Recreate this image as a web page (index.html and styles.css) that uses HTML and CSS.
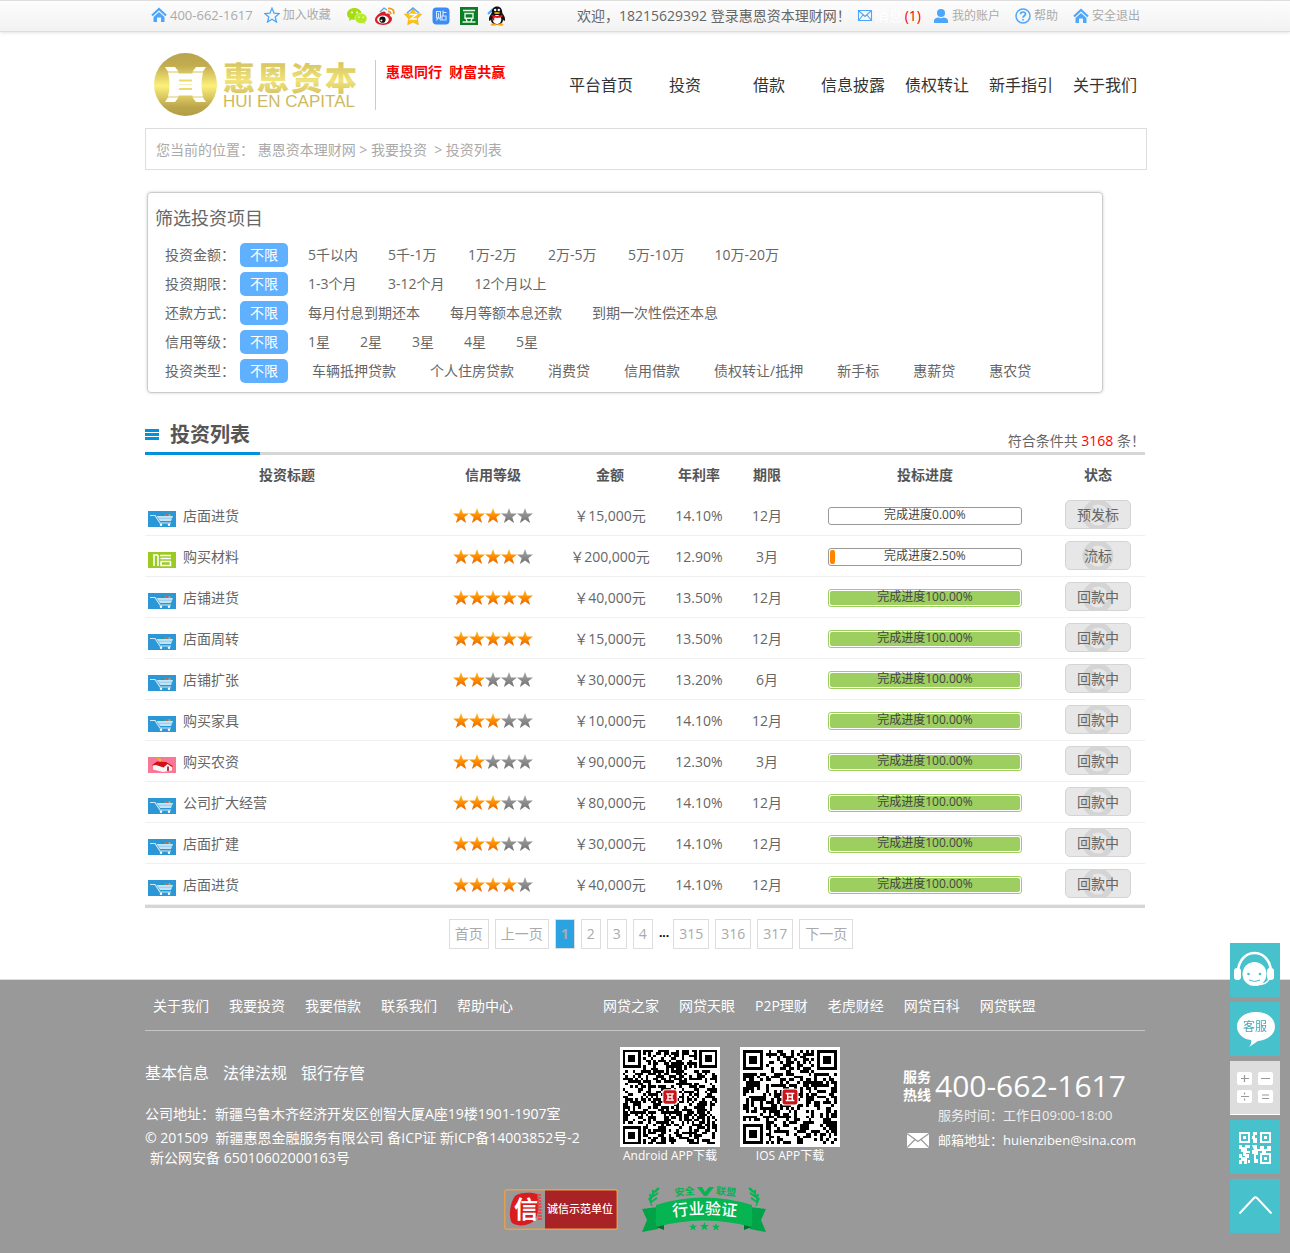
FILE: index.html
```html
<!DOCTYPE html>
<html lang="zh-CN">
<head>
<meta charset="utf-8">
<meta name="viewport" content="width=device-width, initial-scale=1">
<title>投资列表 - 惠恩资本理财网</title>
<link rel="stylesheet" href="styles.css">
</head>
<body>
<svg class="sprite" width="0" height="0" aria-hidden="true">
  <defs>
    <linearGradient id="on" x1="0" y1="0" x2="0" y2="1"><stop offset="0" stop-color="#ffc12e"/><stop offset=".5" stop-color="#ff8c00"/><stop offset="1" stop-color="#e06400"/></linearGradient>
    <linearGradient id="off" x1="0" y1="0" x2="0" y2="1"><stop offset="0" stop-color="#aaa"/><stop offset="1" stop-color="#6f6f6f"/></linearGradient>
    <linearGradient id="gold" x1="0" y1="0" x2="0" y2="1"><stop offset="0" stop-color="#b9a44c"/><stop offset=".2" stop-color="#c2ac50"/><stop offset=".52" stop-color="#fdf07a"/><stop offset=".85" stop-color="#bda74c"/><stop offset="1" stop-color="#b39d45"/></linearGradient>
    <linearGradient id="goldtext" x1="0" y1="0" x2="0" y2="1"><stop offset="0" stop-color="#c9b458"/><stop offset=".6" stop-color="#f0e378"/><stop offset="1" stop-color="#cdb95c"/></linearGradient>
    <path id="star" d="M8 0l2 5.600h6l-4.700 3.600 1.800 5.800L8 11.600 2.900 15l1.800-5.800L0 5.600h6z"/>
    <g id="s-on" fill="url(#on)"><use href="#star"/></g>
    <g id="s-off" fill="url(#off)"><use href="#star"/></g>
  </defs>
  <symbol id="stars-2" viewBox="0 0 80 16"><use href="#s-on"/><use href="#s-on" x="16"/><use href="#s-off" x="32"/><use href="#s-off" x="48"/><use href="#s-off" x="64"/></symbol>
  <symbol id="stars-3" viewBox="0 0 80 16"><use href="#s-on"/><use href="#s-on" x="16"/><use href="#s-on" x="32"/><use href="#s-off" x="48"/><use href="#s-off" x="64"/></symbol>
  <symbol id="stars-4" viewBox="0 0 80 16"><use href="#s-on"/><use href="#s-on" x="16"/><use href="#s-on" x="32"/><use href="#s-on" x="48"/><use href="#s-off" x="64"/></symbol>
  <symbol id="stars-5" viewBox="0 0 80 16"><use href="#s-on"/><use href="#s-on" x="16"/><use href="#s-on" x="32"/><use href="#s-on" x="48"/><use href="#s-on" x="64"/></symbol>
  <symbol id="home" viewBox="0 0 16 16"><path d="M1 8.500L8 2l7 6.500" fill="none" stroke="#4da6fc" stroke-width="2.200"/><path d="M2.500 10L8 5l5.500 5v5H10v-4.500H6V15H2.500z" fill="#4da6fc"/></symbol>
  <symbol id="cart" viewBox="0 0 28 16"><path fill="#2b97d6" d="M0 0h28v16H0z"/><path d="M2 4.500h5l5 7.500h11" fill="none" stroke="#cfe9f8" stroke-width="1.200"/><path d="M8.500 5H25l-2 5H12z" fill="#c3e4f7"/><path d="M10.500 7.300h13.500" stroke="#72b9e4" stroke-width=".6"/><path d="M13 3.500h2.500v1.500H13z" fill="#3d9c5c"/><path d="M17 3h2v2h-2z" fill="#c96b5d"/><path d="M20.500 3.300h2v1.700h-2z" fill="#cdaa45"/><circle cx="13" cy="13.700" r="1.200" fill="#fff"/><circle cx="21" cy="13.700" r="1.200" fill="#fff"/></symbol>
  <symbol id="credit" viewBox="0 0 28 16"><path fill="#9bcb23" d="M0 0h28v16H0z"/><path d="M5 3h5M6 3v11M10 3v11M12 3.500h11M12.500 6.500h10.500M12.500 9.500h10.500M13 10v3.500h9.500V10" fill="none" stroke="#fff" stroke-width="1.600"/></symbol>
  <symbol id="farm" viewBox="0 0 28 16"><path fill="#fa7896" d="M0 0h28v16H0z"/><path d="M9 1h2v1h2v3h-2V2H9z" fill="#f5c21b"/><path d="M5 8.500l4-3 6 4.500 4-4 5 3v4.500L15 15 5 12.500z" fill="#f7f7f7"/><path d="M3.500 8.500L9 4.500l9 .5 7 4-1 1-4.500-3-4 3.500L8 8z" fill="#cf1118"/><path d="M19 9.500h2V14h-2z" fill="#b8383c"/></symbol>
  <symbol id="ban" viewBox="0 0 32 27"><circle cx="16" cy="14" r="13" fill="none" stroke="#d4d4d4" stroke-width="5"/><path d="M7 5l18 18" stroke="#d4d4d4" stroke-width="4"/></symbol>
</svg>

<div class="topbar">
  <div class="wrap topbar-in">
    <div class="top-left">
      <span class="tip phone"><svg class="i16"><use href="#home"/></svg>400-662-1617</span>
      <a class="tip fav" href="#"><svg class="i16" viewBox="0 0 16 16"><path d="M8 1.200l2 4.900 5.200.4-4 3.400 1.300 5.100L8 12.200l-4.500 2.800 1.300-5.100-4-3.400 5.200-.4z" fill="none" stroke="#4da6fc" stroke-width="1.300"/></svg>加入收藏</a>
      <a class="soc" href="#" aria-label="微信"><svg viewBox="0 0 20 20"><path d="M7.500 2C3.200 2 0 4.700 0 8c0 1.900 1 3.500 2.600 4.600L2 15l2.800-1.500c3.500 1 9.700-.9 9.700-5.800C14.500 4.500 11.500 2 7.500 2z" fill="#a5dd12"/><path d="M14 7.500c3.500 0 6 2.100 6 4.900 0 1.600-.8 2.900-2 3.900l.4 2.200-2.300-1.200c-4.300.9-8.100-1.400-8.100-4.900 0-2.800 2.600-4.900 6-4.900z" fill="#b4ea28" stroke="#f7f7f7" stroke-width=".6"/><circle cx="5" cy="6.500" r=".9" fill="#fff"/><circle cx="10" cy="6.500" r=".9" fill="#fff"/><circle cx="12" cy="11.300" r=".8" fill="#fff"/><circle cx="16.200" cy="11.300" r=".8" fill="#fff"/></svg></a>
      <a class="soc" href="#" aria-label="微博"><svg viewBox="0 0 20 20"><path d="M7 6c2-1 4-.8 3.800 1.800 3-1 4.800 0 4 2.200 1.800.6 2.200 1.800 2.200 3 0 3-4 6-8.800 6C3.500 19 0 17 0 13.800 0 10.500 4.500 7 7 6z" fill="#d81e25"/><ellipse cx="8" cy="13.500" rx="5.800" ry="4" fill="#fff"/><circle cx="7.500" cy="13.700" r="3.100" fill="#101010"/><circle cx="6.400" cy="14.600" r="1" fill="#fff"/><path d="M13 2.500c4-.7 6.700 2 5.500 5.600M12.800 5.500c2-.4 3.400.9 2.700 2.700" fill="none" stroke="#f39a20" stroke-width="1.700"/><path d="M5 6l4-4 3 2" fill="none" stroke="#4da6fc" stroke-width="1.300"/></svg></a>
      <a class="soc" href="#" aria-label="QQ空间"><svg viewBox="0 0 20 20"><path d="M10 2l2.600 5.300 5.900.9-4.100 4.400.9 6.100-5.300-2.700-5.300 2.700.9-6.100L1.500 8.200l5.900-.9z" fill="#ffc311" stroke="#f0a30a" stroke-width=".6"/><path d="M4 7l6-5 6 5" fill="none" stroke="#4da6fc" stroke-width="1.500"/><path d="M6.500 8.500h7l-6 4.500h6.500" fill="none" stroke="#fff" stroke-width="1.400"/></svg></a>
      <a class="soc" href="#" aria-label="贴吧"><svg viewBox="0 0 20 20"><rect x="1.500" y="1.500" width="17" height="17" rx="4" fill="#3a8cf8"/><path d="M5.500 5.500h4V12h-4zM7.500 7v4l-2 3.500M8.500 12.500l1.500 2M12 4.500v5M12 6.500h3.500M11 10h4v4h-4z" fill="none" stroke="#d3e8ff" stroke-width="1.100"/></svg></a>
      <a class="soc" href="#" aria-label="豆瓣"><svg viewBox="0 0 20 20"><path d="M1 1h18v18H1z" fill="#0b7d24"/><path d="M4 4.500h12M3.500 16h13M7 12.500l1 3M13 12.500l-1 3" stroke="#e5f5e8" stroke-width="1.400"/><path d="M6 7.500h8v4.700H6z" fill="none" stroke="#e5f5e8" stroke-width="1.400"/></svg></a>
      <a class="soc" href="#" aria-label="QQ"><svg viewBox="0 0 20 20"><path d="M1 8l5-5" stroke="#4da6fc" stroke-width="2"/><path d="M10 .5c3.500 0 5.300 2.500 5.300 6.500 2 2.500 3.200 5 2.600 7.500-.4.900-1.200.3-1.900-1 0 3.500-2 5-6 5s-6-1.500-6-5c-.7 1.300-1.500 1.900-1.900 1C1.500 12 2.700 9.500 4.700 7 4.700 3 6.500.5 10 .5z" fill="#111"/><ellipse cx="10" cy="13.500" rx="4.300" ry="4.500" fill="#fff"/><path d="M4.500 8.500c4 2 7 2 11 0v2.200c-3 1.300-5 1.500-8 .8l-.3 3H5.700v-3.800l-1.200-.5z" fill="#e5141b"/><circle cx="8.200" cy="4" r="1.200" fill="#fff"/><circle cx="11.800" cy="4" r="1.200" fill="#fff"/><ellipse cx="10" cy="7" rx="3" ry="1" fill="#f7a815"/><ellipse cx="6.500" cy="18.700" rx="3" ry="1.100" fill="#f7a815"/><ellipse cx="13.500" cy="18.700" rx="3" ry="1.100" fill="#f7a815"/></svg></a>
    </div>
    <div class="top-right">
      <span class="welcome">欢迎，18215629392 登录惠恩资本理财网<span class="pm">！</span></span>
      <a class="msg" href="#"><svg class="i16" viewBox="0 0 16 16"><path d="M1.500 2.500h13v10h-13zM1.500 2.500L8 8.500l6.500-6M1.500 12.500L6 7M14.500 12.500L10 7" fill="none" stroke="#4da6fc" stroke-width="1.100"/></svg><span class="msg-label">消息</span><span class="red">(1)</span></a>
      <a class="tip account" href="#"><svg class="i16" viewBox="0 0 16 16"><circle cx="8" cy="5" r="4" fill="#4da6fc"/><path d="M1 15v-2.500C1 10.500 4 9.500 5.500 9.500c1.500 1 3.500 1 5 0 1.500 0 4.500 1 4.500 3V15z" fill="#4da6fc"/></svg>我的账户</a>
      <a class="tip help" href="#"><svg class="i16" viewBox="0 0 16 16"><circle cx="8" cy="8" r="7" fill="none" stroke="#4da6fc" stroke-width="1.500"/><path d="M5.500 6.300C5.500 3.300 10.500 3.300 10.500 6c0 1.700-2.500 1.800-2.500 3.700M8 11v1.600" fill="none" stroke="#4da6fc" stroke-width="1.700"/></svg>帮助</a>
      <a class="tip" href="#"><svg class="i16"><use href="#home"/></svg>安全退出</a>
    </div>
  </div>
</div>

<header class="wrap header">
  <a class="logo" href="#" aria-label="惠恩资本"><svg width="212" height="64" viewBox="0 0 212 64">
    <circle cx="31.500" cy="31.500" r="31.500" fill="url(#gold)"/>
    <path d="M11 14h10l3.500 4.500H14zM52 14H42l-3.500 4.500H49zM11 49h10l3.500-4.500H14zM52 49H42l-3.500-4.500H49z" fill="#fff"/>
    <path d="M14 19.500h10.500V20.500h14V19.500H49q-3 12 0 24H38.500v-1h-14v1H14q3-12 0-24z" fill="#fff"/>
    <path d="M25 27.500h13M25 36h13" stroke="#eadb6c" stroke-width="1.800"/><path d="M25 31.500h13" stroke="#f5ebae" stroke-width=".8"/>
    <text class="logo-cn" x="69 103 137 171" y="37" fill="url(#goldtext)">惠恩资本</text>
    <text class="logo-en" x="69" y="54" fill="#cdba5e">HUI EN CAPITAL</text>
  </svg></a>
  <p class="slogan">惠恩同行&nbsp; 财富共赢</p>
  <nav class="nav">
    <a href="#">平台首页</a><a href="#">投资</a><a href="#">借款</a><a href="#">信息披露</a><a href="#">债权转让</a><a href="#">新手指引</a><a href="#">关于我们</a>
  </nav>
</header>

<main class="wrap">
  <div class="crumb">您当前的位置<span class="pm">：</span> <a href="#">惠恩资本理财网</a> &gt; <a href="#">我要投资</a>&nbsp; &gt; <a href="#">投资列表</a></div>

  <section class="filter">
    <h2>筛选投资项目</h2>
    <div class="frow even"><span class="flabel">投资金额<span class="pm">：</span></span><a class="on" href="#">不限</a><a href="#">5千以内</a><a href="#">5千-1万</a><a href="#">1万-2万</a><a href="#">2万-5万</a><a href="#">5万-10万</a><a href="#">10万-20万</a></div>
    <div class="frow even"><span class="flabel">投资期限<span class="pm">：</span></span><a class="on" href="#">不限</a><a href="#">1-3个月</a><a href="#">3-12个月</a><a href="#">12个月以上</a></div>
    <div class="frow"><span class="flabel">还款方式<span class="pm">：</span></span><a class="on" href="#">不限</a><a href="#">每月付息到期还本</a><a href="#">每月等额本息还款</a><a href="#">到期一次性偿还本息</a></div>
    <div class="frow"><span class="flabel">信用等级<span class="pm">：</span></span><a class="on" href="#">不限</a><a href="#">1星</a><a href="#">2星</a><a href="#">3星</a><a href="#">4星</a><a href="#">5星</a></div>
    <div class="frow wide"><span class="flabel">投资类型<span class="pm">：</span></span><a class="on" href="#">不限</a><a href="#">车辆抵押贷款</a><a href="#">个人住房贷款</a><a href="#">消费贷</a><a href="#">信用借款</a><a href="#">债权转让/抵押</a><a href="#">新手标</a><a href="#">惠薪贷</a><a href="#">惠农贷</a></div>
  </section>

  <section>
    <div class="list-head">
      <h1><svg width="14" height="12" viewBox="0 0 14 12"><path d="M0 0h14v3H0zM0 4h14v3H0zM0 8h14v3H0z" fill="#0092dc"/></svg>投资列表</h1>
      <p class="count">符合条件共 <span class="red">3168</span> 条<span class="pm">！</span></p>
    </div>
    <table class="list">
      <colgroup><col class="c-title"><col class="c-star"><col class="c-amt"><col class="c-rate"><col class="c-term"><col class="c-prog"><col class="c-state"></colgroup>
      <thead><tr><th>投资标题</th><th>信用等级</th><th>金额</th><th>年利率</th><th>期限</th><th>投标进度</th><th>状态</th></tr></thead>
      <tbody>
        <tr><td><a class="title" href="#"><svg><use href="#cart"/></svg>店面进货</a></td><td><svg class="stars"><use href="#stars-3"/></svg></td><td>￥15,000元</td><td>14.10%</td><td>12月</td><td><div class="prog"><span class="ptext">完成进度0.00%</span></div></td><td><button class="state" type="button"><svg><use href="#ban"/></svg><span>预发标</span></button></td></tr>
        <tr><td><a class="title" href="#"><svg><use href="#credit"/></svg>购买材料</a></td><td><svg class="stars"><use href="#stars-4"/></svg></td><td>￥200,000元</td><td>12.90%</td><td>3月</td><td><div class="prog"><i class="bar" style="width:2.5%"></i><span class="ptext">完成进度2.50%</span></div></td><td><button class="state" type="button"><svg><use href="#ban"/></svg><span>流标</span></button></td></tr>
        <tr><td><a class="title" href="#"><svg><use href="#cart"/></svg>店铺进货</a></td><td><svg class="stars"><use href="#stars-5"/></svg></td><td>￥40,000元</td><td>13.50%</td><td>12月</td><td><div class="prog full"><i class="bar" style="width:100%"></i><span class="ptext">完成进度100.00%</span></div></td><td><button class="state" type="button"><svg><use href="#ban"/></svg><span>回款中</span></button></td></tr>
        <tr><td><a class="title" href="#"><svg><use href="#cart"/></svg>店面周转</a></td><td><svg class="stars"><use href="#stars-5"/></svg></td><td>￥15,000元</td><td>13.50%</td><td>12月</td><td><div class="prog full"><i class="bar" style="width:100%"></i><span class="ptext">完成进度100.00%</span></div></td><td><button class="state" type="button"><svg><use href="#ban"/></svg><span>回款中</span></button></td></tr>
        <tr><td><a class="title" href="#"><svg><use href="#cart"/></svg>店铺扩张</a></td><td><svg class="stars"><use href="#stars-2"/></svg></td><td>￥30,000元</td><td>13.20%</td><td>6月</td><td><div class="prog full"><i class="bar" style="width:100%"></i><span class="ptext">完成进度100.00%</span></div></td><td><button class="state" type="button"><svg><use href="#ban"/></svg><span>回款中</span></button></td></tr>
        <tr><td><a class="title" href="#"><svg><use href="#cart"/></svg>购买家具</a></td><td><svg class="stars"><use href="#stars-3"/></svg></td><td>￥10,000元</td><td>14.10%</td><td>12月</td><td><div class="prog full"><i class="bar" style="width:100%"></i><span class="ptext">完成进度100.00%</span></div></td><td><button class="state" type="button"><svg><use href="#ban"/></svg><span>回款中</span></button></td></tr>
        <tr><td><a class="title" href="#"><svg><use href="#farm"/></svg>购买农资</a></td><td><svg class="stars"><use href="#stars-2"/></svg></td><td>￥90,000元</td><td>12.30%</td><td>3月</td><td><div class="prog full"><i class="bar" style="width:100%"></i><span class="ptext">完成进度100.00%</span></div></td><td><button class="state" type="button"><svg><use href="#ban"/></svg><span>回款中</span></button></td></tr>
        <tr><td><a class="title" href="#"><svg><use href="#cart"/></svg>公司扩大经营</a></td><td><svg class="stars"><use href="#stars-3"/></svg></td><td>￥80,000元</td><td>14.10%</td><td>12月</td><td><div class="prog full"><i class="bar" style="width:100%"></i><span class="ptext">完成进度100.00%</span></div></td><td><button class="state" type="button"><svg><use href="#ban"/></svg><span>回款中</span></button></td></tr>
        <tr><td><a class="title" href="#"><svg><use href="#cart"/></svg>店面扩建</a></td><td><svg class="stars"><use href="#stars-3"/></svg></td><td>￥30,000元</td><td>14.10%</td><td>12月</td><td><div class="prog full"><i class="bar" style="width:100%"></i><span class="ptext">完成进度100.00%</span></div></td><td><button class="state" type="button"><svg><use href="#ban"/></svg><span>回款中</span></button></td></tr>
        <tr><td><a class="title" href="#"><svg><use href="#cart"/></svg>店面进货</a></td><td><svg class="stars"><use href="#stars-4"/></svg></td><td>￥40,000元</td><td>14.10%</td><td>12月</td><td><div class="prog full"><i class="bar" style="width:100%"></i><span class="ptext">完成进度100.00%</span></div></td><td><button class="state" type="button"><svg><use href="#ban"/></svg><span>回款中</span></button></td></tr>
      </tbody>
    </table>
    <nav class="pager" aria-label="分页"><a href="#">首页</a><a href="#">上一页</a><a class="cur" href="#">1</a><a href="#">2</a><a href="#">3</a><a href="#">4</a><span>...</span><a href="#">315</a><a href="#">316</a><a href="#">317</a><a href="#">下一页</a></nav>
  </section>
</main>

<footer class="footer">
  <div class="wrap">
    <div class="flinks">
      <nav><a href="#">关于我们</a><a href="#">我要投资</a><a href="#">我要借款</a><a href="#">联系我们</a><a href="#">帮助中心</a></nav>
      <nav><a href="#">网贷之家</a><a href="#">网贷天眼</a><a href="#">P2P理财</a><a href="#">老虎财经</a><a href="#">网贷百科</a><a href="#">网贷联盟</a></nav>
    </div>
    <div class="finfo">
      <div class="company">
        <nav><a href="#">基本信息</a><a href="#">法律法规</a><a href="#">银行存管</a></nav>
        <p class="addr">公司地址<span class="pm">：</span>新疆乌鲁木齐经济开发区创智大厦A座19楼1901-1907室</p>
        <p>© 201509&nbsp; 新疆惠恩金融服务有限公司 备ICP证 新ICP备14003852号-2</p>
        <p class="police">新公网安备 65010602000163号</p>
      </div>
      <figure><svg class="qr" data-seed="7" viewBox="-1 -1 39 39" data-size="37"></svg><figcaption>Android APP下载</figcaption></figure>
      <figure><svg class="qr" data-seed="23" viewBox="-1 -1 35 35" data-size="33"></svg><figcaption>IOS APP下载</figcaption></figure>
      <div class="contact">
        <div class="hot"><b>服务<br>热线</b><strong>400-662-1617</strong></div>
        <p class="hours">服务时间<span class="pm">：</span>工作日09:00-18:00</p>
        <p class="mail"><svg width="22" height="15" viewBox="0 0 22 15"><path d="M0 0h22v15H0z" fill="#fff"/><path d="M0 .5l11 8 11-8M0 14.500l8-8M22 14.500l-8-8" fill="none" stroke="#999" stroke-width="1.200"/></svg><span class="mail-label">邮箱地址<span class="pm">：</span></span><a href="mailto:huienziben@sina.com">huienziben@sina.com</a></p>
      </div>
    </div>
    <div class="badges">
      <a href="#" aria-label="诚信示范单位"><svg width="114" height="41" viewBox="0 0 114 41"><rect x="1" y="1" width="112" height="39" rx="2" fill="#999"/><path d="M41 1h72v39H41z" fill="#a92226"/><rect x=".75" y=".75" width="112.500" height="39.500" rx="2" fill="none" stroke="#eca148" stroke-width="1.300"/><path d="M11 7c5-4 16-4 22-2 3 6 2 22-3 27-6 5-16 6-22 2-4-6-2-20 3-27z" fill="#da1c1f"/><path d="M35 5l1 27" stroke="#e5494b" stroke-width="4" stroke-dasharray="2 1"/><text class="b-xin" x="10" y="29">信</text><text class="b-cx" x="43" y="24">诚信示范单位</text></svg></a>
      <a href="#" aria-label="行业验证"><svg width="124" height="52" viewBox="0 -3 124 52"><path id="arc1" d="M12 34Q62 23 112 34" fill="none"/><path id="arc2" d="M28 11Q62 5 98 11" fill="none"/><path d="M0 23l16-2v22l-16 3 5-12zM124 23l-16-2v22l16 3-5-12z" fill="#00a347"/><path d="M14 19Q62 4 110 19V41Q62 28 14 41z" fill="#06b452"/><path d="M14 41l8-2v5zM110 41l-8-2v5z" fill="#00732f"/><path d="M55 1h5l3 5 4-5h5l-7 9h-3z" fill="#06b452"/><path d="M10 20C7 14 10 7 16 2M114 20c3-6 0-13-6-18" fill="none" stroke="#06b452" stroke-width="1.300"/><path d="M9 17l-2-5M9 13l-1-5M11 9l0-5M9 16l6-4M10 11l6-4M13 6l4-4M115 17l2-5M115 13l1-5M113 9V4M115 16l-6-4M114 11l-6-4M111 6l-4-4" stroke="#06b452" stroke-width="2"/><g fill="#06b452"><use href="#star" transform="translate(47 37) scale(.5)"/><use href="#star" transform="translate(58 36) scale(.55)"/><use href="#star" transform="translate(70 37) scale(.5)"/></g><text class="b-hy"><textPath href="#arc1" startOffset="19">行业验证</textPath></text><text class="b-aq"><textPath href="#arc2" startOffset="5">安全</textPath></text><text class="b-aq"><textPath href="#arc2" startOffset="46">联盟</textPath></text></svg></a>
    </div>
  </div>
</footer>

<aside class="side">
  <a href="#" aria-label="在线客服"><svg viewBox="0 0 50 54"><circle cx="24.500" cy="31" r="12" fill="#fff"/><path d="M8 28C10 4 39 4 41 28" fill="none" stroke="#fff" stroke-width="2.500"/><rect x="4" y="25" width="7" height="12" rx="3" fill="#fff"/><rect x="37" y="25" width="7" height="12" rx="3" fill="#fff"/><path d="M39 36c-2 5-6 5-13 6" fill="none" stroke="#fff" stroke-width="1.500"/><circle cx="18.500" cy="31" r="1.300" fill="#47c1cb"/><circle cx="30" cy="31" r="1.300" fill="#47c1cb"/><path d="M19 37q6 3 11 0" fill="none" stroke="#47c1cb"/></svg></a>
  <a href="#"><svg viewBox="0 0 50 54"><path d="M26 10c11 0 19 6 19 14.500S37 38 28 39l-9 6c2-3 3-5 2-7C12 37 7 31 7 24.500 7 16 15 10 26 10z" fill="#fff"/><text class="kf" x="13" y="29">客服</text></svg></a>
  <a class="calc" href="#" aria-label="计算器"><svg viewBox="0 0 50 54"><g fill="#fff"><rect x="7" y="11" width="15" height="13" rx="2"/><rect x="28" y="11" width="15" height="13" rx="2"/><rect x="7" y="29" width="15" height="13" rx="2"/><rect x="28" y="29" width="15" height="13" rx="2"/></g><path d="M11 17.500h8M14.500 14v7M31 17.500h9M11 35.500h8M32 34h7M32 37.500h7M14.500 31.500v2M14.500 37.500v2" stroke="#999" stroke-width="1.200"/></svg></a>
  <a href="#" aria-label="二维码"><svg viewBox="0 0 50 54"><path d="M9 12h11v11H9zM30 12h11v11H30zM30 33h11v11H30z" fill="#fff"/><path d="M11 14h7v7h-7zM32 14h7v7h-7zM32 35h7v7h-7z" fill="#47c1cb"/><path d="M13 16h3v3h-3zM34 16h3v3h-3zM34 37h3v3h-3zM23 12h4v3h-2v3h2v5h-4v-4h-1v-3h1zM9 25h3v2h3v-2h5v3h-3v3h3v2h-4v3h-3v-4h-2v-3H9zM22 25h5v4h3v-3h4v3h3v-3h4v5h-5v2h-4v-2h-4v4h-2v4h2v4h-4v-9h-2v-4h2zM9 34h3v3h3v-3h4v4h-2v6h-3v-3h-2v3H9v-4h2v-2H9zM18 40h2v3h-2z" fill="#fff"/></svg></a>
  <a href="#" aria-label="返回顶部"><svg viewBox="0 0 50 54"><path d="M9.500 34.500L24 19q1.500-1.500 3 0l14.500 15.500" fill="none" stroke="#fff" stroke-width="2"/></svg></a>
</aside>
<script src="qr.js"></script>
</body>
</html>
```
FILE: styles.css
```css
* { box-sizing: border-box; }
body { margin: 0; background: #fff; color: #666; font: 14px/22px "Open Sans", "Noto Sans CJK SC", sans-serif; }
a { color: inherit; text-decoration: none; }
p, h1, h2, figure { margin: 0; }
svg { display: block; flex: none; }
.sprite { position: absolute; }
.wrap { width: 100%; max-width: 1000px; margin: 0 auto; }
.red { color: #f00; }
.i16 { width: 16px; height: 16px; }
/* full-width marks are centred in their cell in this face */
.pm { font-family: "Noto Sans CJK TC", sans-serif; line-height: 1; }

.topbar { height: 32px; border-top: 1px solid #ddd; border-bottom: 1px solid #ddd; background: linear-gradient(#fdfdfd, #f2f2f2); box-shadow: 0 1px 3px #e4e4e4; }
.topbar-in, .top-left, .top-right, .tip, .msg { display: flex; align-items: center; }
.topbar-in { justify-content: space-between; height: 30px; padding: 0 5px 0 6px; }
.tip { gap: 3px; font-size: 12px; color: #aaa; }
.phone { font-size: 13px; margin-right: 11px; }
.fav { margin-right: 16px; }
.soc { margin-right: 8px; padding-top: 3px; }
.soc svg { width: 20px; height: 20px; }
.top-left { padding-bottom: 3px; }
.msg { gap: 2px; margin: 0 12px 0 6px; }
.msg-label { color: #fff; }
.account, .help { margin-right: 15px; }

.header { display: flex; height: 96px; padding-top: 21px; }
.logo { margin-left: 9px; }
.logo-cn { font: 900 32px "Noto Sans CJK SC", sans-serif; }
.logo-en { font: 17px "Liberation Sans", sans-serif; }
.slogan { height: 50px; margin: 7px 0 0 9px; padding-left: 10px; border-left: 1px solid #ccc; color: #f00; font-weight: 700; line-height: 24px; white-space: nowrap; }
.nav { display: flex; margin: 21px -2px 0 auto; color: #333; font-size: 16px; }
.nav a { width: 84px; text-align: center; }

.crumb { margin-right: -2px; padding: 10px 10px 8px; border: 1px solid #ddd; color: #aaa; }
.filter { max-width: 956px; margin: 22px 0 0 2px; padding: 12px 7px 9px; border: 1px solid #ccc; border-radius: 4px; box-shadow: 0 0 3px #ccc; }
.filter h2 { margin-bottom: 12px; font-size: 18px; font-weight: 400; line-height: 26px; }
.frow { display: flex; flex-wrap: wrap; gap: 10px; padding-left: 10px; margin-bottom: 5px; line-height: 24px; }
.frow:last-child { margin-bottom: 0; }
.frow a { padding: 0 10px; border-radius: 5px; }
.even a { min-width: 70px; }
.frow .on { min-width: 0; background: #5fb0ff; color: #fff; }
.flabel { width: 75px; margin-right: -10px; }
.frow.wide { gap: 14px; }
.wide .flabel { margin-right: -14px; }

.list-head { display: flex; justify-content: space-between; margin-top: 23px; border-bottom: 3px solid #d6d6d6; }
.list-head h1 { display: flex; align-items: center; gap: 11px; width: 115px; height: 39px; margin-bottom: -3px; padding-top: 1px; border-bottom: 3px solid #0092dc; color: #555; font-size: 20px; white-space: nowrap; }
.count { padding-top: 14px; }
.list { width: 100%; table-layout: fixed; border-collapse: separate; border-spacing: 0; border-bottom: 3px solid #d6d6d6; text-align: center; }
.c-title { width: 28.4%; } .c-star { width: 12.8%; } .c-amt { width: 10.6%; } .c-rate { width: 7.2%; } .c-term { width: 6.4%; } .c-prog { width: 25.2%; } .c-state { width: 9.4%; }
.list th { height: 40px; padding: 0; color: #555; }
.list td { height: 41px; padding: 1px 0 0; border-bottom: 1px solid #f0f0f0; }
.title { display: flex; align-items: flex-end; gap: 7px; padding-left: 3px; }
.title svg { width: 28px; height: 16px; }
.stars { width: 80px; height: 16px; margin: 0 auto; }
.prog { position: relative; width: 77%; height: 18px; margin: 0 auto; padding: 1px; border: 1px solid #999; border-radius: 3px; color: #444; font-size: 12px; }
.bar { display: block; height: 14px; min-width: 5px; border-radius: 2px; background: #ff8400; }
.full { border-color: #9ccf60; }
.full .bar { background: #9ccf60; }
.ptext { position: absolute; inset: 0; line-height: 14px; }
.state { position: relative; display: block; width: 66px; height: 29px; margin: 0 auto 2px; padding: 0; border: 1px solid #d4d4d4; border-radius: 5px; background: #e7e7e7; color: #666; font: inherit; }
.state svg { position: absolute; left: 16px; top: 0; width: 32px; height: 27px; }
.state span { position: relative; }

.pager { display: flex; justify-content: center; gap: 6px; margin: 11px 0 30px 12px; color: #aaa; line-height: 28px; }
.pager a { padding: 0 5px; border: 1px solid #ddd; }
.pager .cur { background: #2ba3e3; font-weight: 700; }
.pager span { margin-right: -2px; color: #000; font-size: 12px; font-weight: 700; }

.footer { padding-bottom: 20px; border-top: 1px solid #ddd; background: #999; color: #fff; }
.flinks { display: flex; gap: 90px; padding: 15px 8px 13px; border-bottom: 1px solid #c4c4c4; }
.flinks nav { display: flex; gap: 20px; }
.finfo { display: flex; gap: 20px; padding-top: 16px; }
.company { flex: 0 0 455px; padding-top: 15px; white-space: nowrap; }
.company nav { display: flex; gap: 14px; margin-bottom: 18px; font-size: 16px; }
.company p { line-height: 20px; }
.company .addr { line-height: 24px; margin-bottom: 2px; }
.police { padding-left: 5px; }
figure { font-size: 12px; line-height: 18px; text-align: center; white-space: nowrap; }
.qr { width: 100px; height: 100px; background: #fff; }
.contact { padding: 21px 0 0 43px; font-size: 13px; white-space: nowrap; }
.hot { display: flex; gap: 4px; align-items: center; }
.hot b { font-size: 14px; line-height: 18px; }
.hot strong { font-size: 30px; font-weight: 400; line-height: 36px; }
.hours { padding-left: 35px; color: #eee; }
.mail { display: flex; align-items: center; padding: 3px 0 0 4px; }
.mail-label { margin-left: 9px; }
.badges { display: flex; justify-content: center; align-items: center; gap: 24px; padding-top: 15px; margin-right: 20px; }
.b-xin { font: 700 24px "Noto Sans CJK SC", sans-serif; fill: #fff; }
.b-cx { font: 500 11px "Noto Sans CJK SC", sans-serif; fill: #fff; }
.b-hy { font: 500 16px "Noto Sans CJK SC", sans-serif; fill: #fff; }
.b-aq { font: 700 10px "Noto Sans CJK SC", sans-serif; fill: #06b452; }

.side { position: fixed; right: 10px; bottom: 20px; display: grid; gap: 5px; }
.side a { width: 50px; height: 54px; background: #47c1cb; }
.side svg { width: 50px; height: 54px; }
.side .calc { background: #ddd; border-bottom: 1px solid #fff; }
.kf { font: 12px "Noto Sans CJK SC", sans-serif; fill: #47a9b5; }
```
FILE: qr.js
```js
// Fills each .qr element with a code-like module grid and the brand seal.
document.querySelectorAll('.qr').forEach(function (el) {
  var n = +el.dataset.size, s = +el.dataset.seed, d = '', x, y;
  function finder(x, y) {
    var corners = [[0, 0], [n - 7, 0], [0, n - 7]];
    for (var i = 0; i < 3; i++) {
      var a = x - corners[i][0], b = y - corners[i][1];
      if (a >= -1 && a <= 7 && b >= -1 && b <= 7) {
        var r = Math.max(Math.abs(a - 3), Math.abs(b - 3));
        return r === 3 || r < 2 ? 1 : 0;
      }
    }
    return -1;
  }
  for (y = 0; y < n; y++) for (x = 0; x < n; x++) {
    s = (s * 1103515245 + 12345) % 2147483648;
    var f = finder(x, y);
    if (f === 1 || (f < 0 && (s >> 16) % 2)) d += 'M' + x + ' ' + y + 'h1v1h-1z';
  }
  var m = n / 2;
  el.innerHTML = '<path d="' + d + '" fill="#000" shape-rendering="crispEdges"/>' +
    '<rect x="' + (m - 3) + '" y="' + (m - 3) + '" width="6" height="6" rx="1" fill="#fff"/>' +
    '<rect x="' + (m - 2.6) + '" y="' + (m - 2.6) + '" width="5.2" height="5.2" rx=".8" fill="#c9141a"/>' +
    '<path transform="translate(' + m + ' ' + m + ')" d="M-1.500-1.200h3M-1.500 1.200h3M-.8-1.200v2.400M.8-1.200v2.400M-.8 0h1.600" stroke="#fff" stroke-width=".5"/>';
});
```
